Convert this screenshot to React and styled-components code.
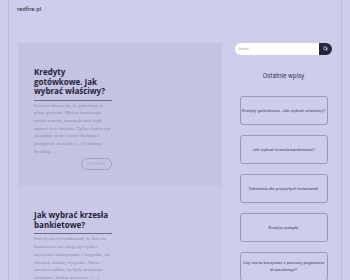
import styled, { createGlobalStyle } from "styled-components";
import { Search } from "lucide-react";

const GlobalStyle = createGlobalStyle`
  html, body {
    margin: 0;
    padding: 0;
    background: #cfcdec;
  }
  * {
    box-sizing: border-box;
  }
`;

const Page = styled.div`
  margin: 0 8px;
  min-height: 100vh;
  border-left: 1px solid #bab8dc;
  border-right: 1px solid #bab8dc;
`;

const Header = styled.header`
  height: 43px;
  padding: 5px 8px;
  font-family: Roboto, sans-serif;
  font-size: 6.2px;
  color: #2e2c44;
`;

const Layout = styled.div`
  display: grid;
  grid-template-columns: 204px 1fr;
  padding-left: 9px;
`;

const Posts = styled.main`
  display: flex;
  flex-direction: column;
`;

const Post = styled.article`
  background: ${(p) => (p.$dark ? "#c4c3e2" : "#c9c8e7")};
  padding: 24px 16px 16px;
`;

const Column = styled.div`
  width: 78px;
  display: flex;
  flex-direction: column;
`;

const Title = styled.h2`
  margin: 0;
  padding-bottom: 4px;
  border-bottom: 1.5px solid #6d6b8f;
  font-family: "Open Sans", "Noto Sans", sans-serif;
  font-weight: 700;
  font-size: 8px;
  line-height: 9.5px;
  color: #24223a;
`;

const Excerpt = styled.p`
  margin: 1px 0 0;
  font-family: "Liberation Serif", serif;
  font-size: 4.9px;
  line-height: 7.7px;
  color: #8c8aac;
`;

const More = styled.button`
  align-self: flex-end;
  margin-top: 3px;
  width: 31px;
  height: 12px;
  padding: 0;
  border: 1px solid #a6a4c6;
  border-radius: 6px;
  background: transparent;
  font-family: "Liberation Serif", serif;
  font-size: 3.5px;
  letter-spacing: 0.3px;
  color: #a6a4c6;
`;

const Sidebar = styled.aside`
  padding: 0 9px 0 13px;
  display: flex;
  flex-direction: column;
  align-items: center;
`;

const SearchBar = styled.form`
  display: flex;
  width: 97px;
  height: 11.5px;
`;

const SearchInput = styled.div`
  flex: 1;
  background: #ffffff;
  border-radius: 6px 0 0 6px;
  padding-left: 3px;
  display: flex;
  align-items: center;
  font-family: Roboto, sans-serif;
  font-size: 3.5px;
  color: #a9a7bf;
`;

const SearchButton = styled.div`
  width: 13px;
  background: #27253d;
  border-radius: 0 6px 6px 0;
  display: flex;
  align-items: center;
  justify-content: center;
  color: #ffffff;
`;

const WidgetTitle = styled.h3`
  margin: 17px 0 15px;
  font-family: Roboto, sans-serif;
  font-weight: 400;
  font-size: 6.4px;
  line-height: 9px;
  color: #3b3958;
`;

const RecentList = styled.div`
  display: flex;
  flex-direction: column;
  gap: 10px;
`;

const RecentItem = styled.a`
  width: 88px;
  height: 29px;
  border: 1px solid #9a98bf;
  border-radius: 3px;
  padding: 0;
  display: flex;
  align-items: center;
  justify-content: center;
  text-align: center;
  font-family: Roboto, sans-serif;
  font-size: 4.4px;
  line-height: 7px;
  color: #4a4868;
`;

const posts = [
  {
    title: "Kredyty gotówkowe. Jak wybrać właściwy?",
    text: "Czasem zdarza się, że potrzebujesz pilnie gotówki. Musisz koniecznie zrobić remont, naprawić auto bądź opłacić ferie dziecka. Tylko skąd wziąć pieniądze na tu i teraz? Rodzina i przyjaciele niekiedy […] Continue Reading…",
    more: true,
  },
  {
    title: "Jak wybrać krzesła bankietowe?",
    text: "Należy mieć świadomość, że krzesła bankietowe nie mogą być tylko i wyłącznie funkcjonalne i wygodne, ale również solidne, wygodne. Warto również zadbać, by były atrakcyjne wizualnie. Istotne znaczenie […]",
    more: false,
  },
];

const recent = [
  "Kredyty gotówkowe. Jak wybrać właściwy?",
  "Jak wybrać krzesła bankietowe?",
  "Szkolenia dla przyszłych kwiaciarek",
  "Kredyty pułapki",
  "Czy warto korzystać z pomocy pogotowia ślusarskiego?",
];

export default function App() {
  return (
    <>
      <GlobalStyle />
      <Page>
        <Header>redfire.pl</Header>
        <Layout>
          <Posts>
            {posts.map((post, index) => (
              <Post key={index} $dark={index === 0}>
                <Column>
                  <Title>{post.title}</Title>
                  <Excerpt>{post.text}</Excerpt>
                  {post.more && <More>SEE MORE</More>}
                </Column>
              </Post>
            ))}
          </Posts>
          <Sidebar>
            <SearchBar>
              <SearchInput>Search</SearchInput>
              <SearchButton>
                <Search size={5} strokeWidth={3} />
              </SearchButton>
            </SearchBar>
            <WidgetTitle>Ostatnie wpisy</WidgetTitle>
            <RecentList>
              {recent.map((item, index) => (
                <RecentItem key={index}>{item}</RecentItem>
              ))}
            </RecentList>
          </Sidebar>
        </Layout>
      </Page>
    </>
  );
}
